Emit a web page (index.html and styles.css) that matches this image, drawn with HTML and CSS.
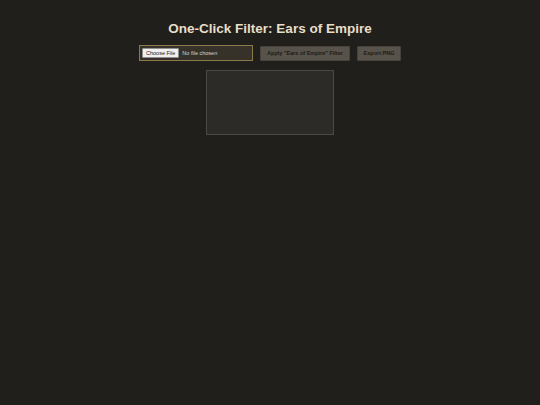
FILE: index.html
```html
<!DOCTYPE html>
<html>
<head>
<meta charset="utf-8">
<title>One-Click Filter: Ears of Empire</title>
<link rel="stylesheet" href="styles.css">
</head>
<body>
<main class="app">
  <h1 class="title">One-Click Filter: Ears of Empire</h1>
  <div class="controls">
    <label class="file-box">
      <input class="file-input" type="file" accept="image/*">
    </label>
    <button class="btn btn-apply">Apply "Ears of Empire" Filter</button>
    <button class="btn btn-export">Export PNG</button>
  </div>
  <div class="canvas-wrap"><canvas class="canvas" width="126" height="63"></canvas></div>
</main>
</body>
</html>
```
FILE: styles.css
```css
html, body {
  margin: 0;
  padding: 0;
  background: #201f1b;
  height: 100%;
}
body {
  font-family: "Liberation Sans", Arial, sans-serif;
  color: #e4dcc8;
}
.app {
  display: flex;
  flex-direction: column;
  align-items: center;
  padding-top: 20px;
}
.title {
  margin: 0;
  font-size: 13.5px;
  font-weight: bold;
  line-height: 17px;
  color: #e6dec9;
}
.controls {
  display: flex;
  align-items: center;
  gap: 7px;
  margin-top: 8px;
}
.file-box {
  display: flex;
  align-items: center;
  width: 108px;
  height: 14px;
  padding: 0 2px;
  background: #36322a;
  border: 1px solid #8c7b4a;
}
.file-input {
  font-family: "Liberation Sans", Arial, sans-serif;
  font-size: 5.5px;
  color: #d8d2c2;
  width: 106px;
}
.file-input::file-selector-button {
  font-family: "Liberation Sans", Arial, sans-serif;
  font-size: 5.5px;
  background: #efefef;
  color: #222;
  border: 1px solid #8f8f8f;
  border-radius: 1px;
  padding: 1px 3px;
  margin-right: 3px;
}
.btn {
  height: 15px;
  padding: 0;
  background: #57524a;
  color: #1d1b17;
  border: 1px solid #47433c;
  border-radius: 1px;
  font-family: "Liberation Sans", Arial, sans-serif;
  font-size: 5.5px;
  font-weight: bold;
  white-space: nowrap;
}
.btn-apply { width: 90px; }
.btn-export { width: 44px; }
.canvas-wrap {
  margin-top: 9px;
  border: 1px solid #4a4943;
  background: #2c2b27;
  line-height: 0;
}
.canvas {
  display: block;
  width: 126px;
  height: 63px;
}
```
